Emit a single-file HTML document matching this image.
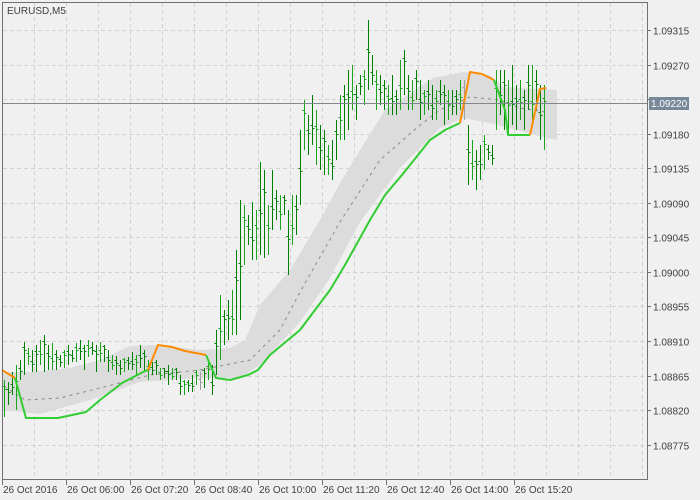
<!DOCTYPE html>
<html><head><meta charset="utf-8"><style>
html,body{margin:0;padding:0;background:#f0f0f0;}
#c{position:absolute;left:0;top:0;width:700px;height:500px;overflow:hidden;font-family:"Liberation Sans",sans-serif;}
</style></head><body><div id="c">
<svg id="s" width="700" height="500" xmlns="http://www.w3.org/2000/svg" style="position:absolute;left:0;top:0">
<rect width="700" height="500" fill="#f0f0f0"/>
<g id="grid" stroke="#d2d2d2" stroke-width="1" stroke-dasharray="4,3"></g>
<polygon fill="#dcdcdc" points="2,372 30,372 70,368 100,360 130,346 160,345 200,350 230,348 245,340 260,305 290,270 320,220 340,183 360,150 385,110 420,87 433,78 463,72 490,75 503,87 557,90 557,140 543,137 490,123 463,118 440,128 400,168 360,222 330,278 300,322 260,365 240,378 200,378 140,382 90,400 40,414 2,410"/>
<polyline fill="none" stroke="#888" stroke-width="1" stroke-dasharray="3,4" points="4,386 25,400 60,398 100,388 150,375 200,370 250,360 280,330 300,292 340,222 380,160 420,125 440,110 470,97 500,100 520,108 545,112"/>
<g id="bars" stroke-width="1"></g>
<g fill="none" stroke-width="2" stroke-linejoin="round">
<polyline stroke="#ff8c00" points="2,370 15,378"/>
<polyline stroke="#32cd32" points="15,378 26,418 58,418 86,412 100,400 122,383 145,371 148,370"/>
<polyline stroke="#ff8c00" points="148,370 158,345 172,347 185,351 206,355"/>
<polyline stroke="#32cd32" points="206,355 216,378 230,380 248,375 258,370 270,355 300,330 315,310 330,290 345,265 370,220 385,195 402,175 430,140 445,130 460,123"/>
<polyline stroke="#ff8c00" points="460,123 470,72 482,74 494,80"/>
<polyline stroke="#32cd32" points="494,80 505,110 508,135 530,135"/>
<polyline stroke="#ff8c00" points="530,135 540,89 546,88"/>
</g>
<line x1="2" y1="103.5" x2="647" y2="103.5" stroke="#808890" stroke-width="1"/>
<rect x="2.5" y="2.5" width="645" height="477" fill="none" stroke="#707070" stroke-width="1"/>
<g id="axis" font-size="10" fill="#404040" font-family="Liberation Sans, sans-serif"></g>
<rect x="649" y="97" width="40" height="13" fill="#778899"/>
<text x="651" y="107" font-size="10" fill="#fff" font-family="Liberation Sans, sans-serif">1.09220</text>
<text x="7" y="14" font-size="10" fill="#404040" font-family="Liberation Sans, sans-serif">EURUSD,M5</text>
</svg>
<script>
var NS="http://www.w3.org/2000/svg";
function el(p,t,a,txt){var e=document.createElementNS(NS,t);for(var k in a)e.setAttribute(k,a[k]);if(txt)e.textContent=txt;document.getElementById(p).appendChild(e);}
for(var x=34;x<647;x+=32)el("grid","line",{x1:x+.5,y1:3,x2:x+.5,y2:479});
var labs=["1.09315","1.09270","1.09225","1.09180","1.09135","1.09090","1.09045","1.09000","1.08955","1.08910","1.08865","1.08820","1.08775"];
for(var k=0;k<13;k++){var y=Math.round(30+34.55*k)+.5;el("grid","line",{x1:3,y1:y,x2:647,y2:y});
el("axis","line",{x1:647,y1:y,x2:651,y2:y,stroke:"#707070"});
if(k!=2)el("axis","text",{x:653,y:y+4},labs[k]);}
var tl=["26 Oct 2016","26 Oct 06:00","26 Oct 07:20","26 Oct 08:40","26 Oct 10:00","26 Oct 11:20","26 Oct 12:40","26 Oct 14:00","26 Oct 15:20"];
for(var i=0;i<9;i++){var x=2+64*i;el("axis","line",{x1:x+.5,y1:479,x2:x+.5,y2:485,stroke:"#707070"});el("axis","text",{x:x+1,y:493},tl[i]);}
var d=[[380,417],[382,405],[372,395],[365,410],[360,380],[342,375],[348,365],[350,372],[345,372],[340,365],[335,372],[345,370],[343,370],[350,370],[355,367],[350,368],[345,365],[350,362],[343,362],[340,360],[345,370],[340,357],[342,355],[345,372],[342,362],[345,362],[350,372],[355,370],[356,375],[360,375],[358,372],[357,370],[352,370],[355,375],[345,368],[350,372],[360,380],[362,375],[360,375],[368,380],[368,378],[365,385],[368,380],[368,380],[375,395],[380,395],[380,392],[375,392],[370,385],[372,390],[368,388],[360,380],[365,395],[330,375],[295,360],[310,345],[300,340],[290,335],[250,335],[200,320],[205,265],[215,245],[202,260],[210,260],[162,255],[170,258],[205,255],[170,230],[190,220],[195,230],[195,215],[210,275],[195,245],[195,235],[130,205],[100,150],[115,155],[95,145],[110,165],[125,170],[130,175],[145,175],[140,180],[120,160],[95,140],[85,140],[70,130],[65,110],[85,120],[75,95],[70,105],[20,90],[55,85],[70,110],[75,105],[80,110],[85,115],[75,115],[90,115],[60,110],[50,95],[75,110],[80,110],[70,100],[80,120],[90,115],[80,110],[85,120],[90,120],[80,105],[85,125],[90,120],[90,115],[90,115],[80,110],[80,120],[125,185],[140,180],[150,190],[145,180],[135,170],[145,160],[145,165],[70,130],[70,115],[70,130],[80,135],[65,125],[85,130],[80,120],[90,130],[65,110],[65,125],[70,110],[85,140],[85,150]];
for(var i=0;i<d.length;i++){var x=4+4*i+.5,h=d[i][0],l=d[i][1];var c=(i*7%5)/5;var cy=Math.round(h+(l-h)*(0.25+0.5*c))+.5;
var col=(i==49||i==115)?"#a0a0a0":(i%3==0?"#1aa51a":"#008000");
el("bars","line",{x1:x,y1:h,x2:x,y2:l,stroke:col});
el("bars","line",{x1:x,y1:cy,x2:x+2,y2:cy,stroke:col});
el("bars","line",{x1:x-2,y1:cy-3,x2:x,y2:cy-3,stroke:col});}
</script>
</div></body></html>
